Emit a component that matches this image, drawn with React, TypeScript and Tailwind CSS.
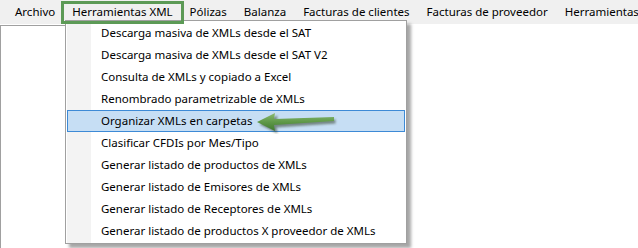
import React from "react";

const menuBar = [
  "Archivo",
  "Herramientas XML",
  "Pólizas",
  "Balanza",
  "Facturas de clientes",
  "Facturas de proveedor",
  "Herramientas",
];

const items = [
  "Descarga masiva de XMLs desde el SAT",
  "Descarga masiva de XMLs desde el SAT V2",
  "Consulta de XMLs y copiado a Excel",
  "Renombrado parametrizable de XMLs",
  "Organizar XMLs en carpetas",
  "Clasificar CFDIs por Mes/Tipo",
  "Generar listado de productos de XMLs",
  "Generar listado de Emisores de XMLs",
  "Generar listado de Receptores de XMLs",
  "Generar listado de productos X proveedor de XMLs",
];

function Arrow() {
  return (
    <svg width="84" height="24" viewBox="0 0 84 24" className="absolute left-[188px] top-[-1px]">
      <defs>
        <linearGradient id="ag" x1="0" y1="0" x2="0" y2="1">
          <stop offset="0" stopColor="#8cbb72" />
          <stop offset="0.5" stopColor="#5e9848" />
          <stop offset="1" stopColor="#3f7a2f" />
        </linearGradient>
        <filter id="sh" x="-20%" y="-40%" width="140%" height="200%">
          <feGaussianBlur stdDeviation="1.2" />
        </filter>
      </defs>
      <path
        d="M2 13 L20 4 L19 10 L78 8 L78 12 L19 16 L20 22 Z"
        fill="#30402a"
        opacity="0.55"
        filter="url(#sh)"
        transform="translate(1.5,1.5)"
      />
      <path d="M1 12 L19 3 L18 9 L78 7 L78 11 L18 15 L19 21 Z" fill="url(#ag)" />
    </svg>
  );
}

export default function App() {
  return (
    <div
      className="relative w-[638px] h-[248px] bg-white overflow-hidden text-[11.5px] text-black"
      style={{ fontFamily: '"Segoe UI", "Noto Sans", "Open Sans", sans-serif' }}
    >
      <div className="flex h-[24px] items-center bg-[#f0f0f0] pl-[6.5px]">
        {menuBar.map((m, i) => (
          <div key={m} className="relative px-[8.5px] whitespace-nowrap leading-[24px]">
            {m}
            {i === 1 && (
              <div className="absolute left-[-3px] right-[-3px] top-[1px] h-[23px] border-[3px] border-[#5c9a56] z-20" />
            )}
          </div>
        ))}
      </div>
      <div className="absolute left-0 top-[25px] w-[66px] h-[230px] border-t border-l border-[#a0a0a0]" />

      {/* dropdown */}
      <div className="absolute left-[65px] top-[20px] w-[342px] border border-[#a0a0a0] bg-white py-[1px] shadow-[4px_4px_3px_rgba(0,0,0,0.35)] z-10">
        <div className="absolute left-[1px] top-0 bottom-0 w-[24px] bg-[#f3f3f3]" />
        {items.map((t, i) => {
          const hl = i === 4;
          return (
            <div
              key={t}
              className={
                hl
                  ? "relative h-[22px] mx-[1px] flex items-center pl-[33px] bg-[#c6def4] border border-[#3d8ad6]"
                  : "relative h-[22px] mx-[1px] flex items-center pl-[34px]"
              }
            >
              <span className="whitespace-nowrap">{t}</span>
              {hl && <Arrow />}
            </div>
          );
        })}
      </div>
    </div>
  );
}
